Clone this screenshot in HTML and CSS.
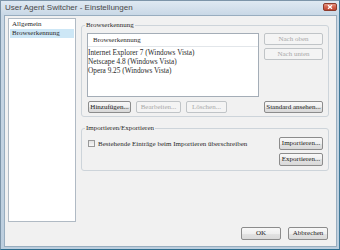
FILE: index.html
```html
<!DOCTYPE html>
<html lang="de">
<head>
<meta charset="UTF-8" />
<title>User Agent Switcher - Einstellungen</title>
<link rel="stylesheet" href="styles.css">
</head>
<body>
  <div class="window">
    <div class="titlebar">
      <span class="title">User Agent Switcher - Einstellungen</span>
      <span class="close">
        <svg width="14" height="8" viewBox="0 0 14 8">
          <defs>
            <linearGradient id="cg" x1="0" y1="0" x2="0" y2="1">
              <stop offset="0" stop-color="#e9a18f" />
              <stop offset="0.5" stop-color="#d4624c" />
              <stop offset="1" stop-color="#b8412d" />
            </linearGradient>
          </defs>
          <rect x="0.5" y="0.5" width="13" height="7" rx="1.5" fill="url(#cg)" stroke="#8d3b2c" />
          <path d="M5 2.2 L9 5.8 M9 2.2 L5 5.8" stroke="#fff" stroke-width="1.3" />
        </svg>
      </span>
    </div>

    <div class="client">
      <div class="main">
        <ul class="nav">
          <li>Allgemein</li>
          <li class="selected">Browserkennung</li>
        </ul>

        <div class="panel">
          <fieldset class="group group-ua">
            <legend>Browserkennung</legend>
            <div class="ua-grid">
              <div class="listview">
                <div class="lv-header">Browserkennung</div>
                <div class="lv-body">
                  <div class="lv-row">Internet Explorer 7 (Windows Vista)</div>
                  <div class="lv-row">Netscape 4.8 (Windows Vista)</div>
                  <div class="lv-row">Opera 9.25 (Windows Vista)</div>
                </div>
              </div>
              <div class="side-buttons">
                <button class="btn" disabled>Nach oben</button>
                <button class="btn" disabled>Nach unten</button>
              </div>
              <div class="row-buttons">
                <button class="btn btn-add">Hinzufügen...</button>
                <button class="btn btn-edit" disabled>Bearbeiten...</button>
                <button class="btn btn-del" disabled>Löschen...</button>
              </div>
              <button class="btn">Standard ansehen...</button>
            </div>
          </fieldset>

          <fieldset class="group group-io">
            <legend>Importieren/Exportieren</legend>
            <div class="io-body">
              <label class="check"><span class="box"></span>Bestehende Einträge beim Importieren überschreiben</label>
              <div class="io-buttons">
                <button class="btn">Importieren...</button>
                <button class="btn">Exportieren...</button>
              </div>
            </div>
          </fieldset>
        </div>
      </div>

      <div class="footer">
        <button class="btn">OK</button>
        <button class="btn">Abbrechen</button>
      </div>
    </div>
  </div>
</body>
</html>
```

FILE: styles.css
```css
* {
  box-sizing: border-box;
}

body {
  margin: 0;
  font-family: "Liberation Serif", serif;
  font-size: 7px;
  color: #2a2a2a;
}

.window {
  width: 340px;
  height: 250px;
  display: flex;
  flex-direction: column;
  padding: 0 2px 2px 3px;
  background: linear-gradient(to bottom, #dfe9f2, #c9d8e6 14px, #bccede);
  border: 1px solid #7d95a9;
  border-bottom-color: #2e6d8e;
  border-right-color: #3f7897;
}

.titlebar {
  height: 14px;
  display: flex;
  justify-content: space-between;
}

.title {
  font-family: "Liberation Sans", sans-serif;
  font-size: 8px;
  line-height: 14px;
  color: #4a4a4a;
  padding-left: 1px;
}

.close {
  margin-top: 2px;
  width: 14px;
  height: 8px;
  display: flex;
}

.client {
  flex: 1;
  display: flex;
  flex-direction: column;
  background: #f1f1f1;
  border: 1px solid #98adbf;
  padding: 2px 7px 6px 3px;
}

.main {
  display: flex;
  gap: 5px;
  height: 204px;
}

.nav {
  list-style: none;
  margin: 0;
  padding: 1px 0 0;
  width: 68px;
  background: #fff;
  border: 1px solid #b0bac4;
}

.nav li {
  line-height: 9px;
  margin: 0 1px;
  padding-left: 2px;
}

.nav .selected {
  background: #cde7f6;
}

.panel {
  width: 248px;
  display: flex;
  flex-direction: column;
  gap: 7px;
  padding-top: 3px;
}

.group {
  margin: 0;
  min-width: 0;
  border: 1px solid #cdd4da;
  border-radius: 3px;
  padding: 4px 5px 3px;
}

.group legend {
  padding: 0 1px;
  margin-left: -2px;
  line-height: 8px;
  color: #2a2a2a;
}

.ua-grid {
  display: grid;
  grid-template-columns: 172px 59px;
  grid-template-rows: 64px 12px;
  column-gap: 5px;
  row-gap: 4px;
}

.listview {
  background: #fff;
  border: 1px solid #a4adb7;
}

.lv-header {
  height: 13px;
  line-height: 12px;
  padding-left: 5px;
  border-bottom: 1px solid #e2e6ea;
}

.lv-body {
  padding-top: 1px;
}

.lv-row {
  line-height: 9px;
  font-size: 7.3px;
}

.side-buttons {
  display: flex;
  flex-direction: column;
  gap: 3px;
}

.side-buttons .btn {
  height: 12px;
}

.row-buttons {
  display: flex;
  gap: 5px;
  padding-left: 1px;
}

.btn-add { width: 43px; }
.btn-edit { width: 45px; }
.btn-del { width: 41px; }

.group-io {
  padding: 5px 5px 4px;
}

.io-body {
  display: flex;
  justify-content: space-between;
}

.check {
  display: flex;
  align-items: center;
  gap: 3px;
  height: 7px;
  margin: 3px 0 0 1px;
}

.box {
  width: 7px;
  height: 7px;
  border: 1px solid #999;
  background: linear-gradient(to bottom, #e2e2e2, #f8f8f8);
}

.io-buttons {
  display: flex;
  flex-direction: column;
  gap: 3px;
  width: 44px;
}

.io-buttons .btn {
  height: 13px;
}

.footer {
  display: flex;
  justify-content: flex-end;
  gap: 7px;
  margin-top: 5px;
  padding-right: 1px;
}

.footer .btn {
  width: 40px;
  height: 13px;
}

.btn {
  font-family: inherit;
  font-size: 7px;
  line-height: 1;
  padding: 0;
  color: #222;
  border: 1px solid #8c8c8c;
  border-radius: 2px;
  background: linear-gradient(to bottom, #f8f8f8, #efefef 50%, #e3e3e3 50%, #d9d9d9);
}

.btn:disabled {
  color: #a8a8a8;
  border-color: #c0c4c7;
  background: #f4f4f4;
}
```
